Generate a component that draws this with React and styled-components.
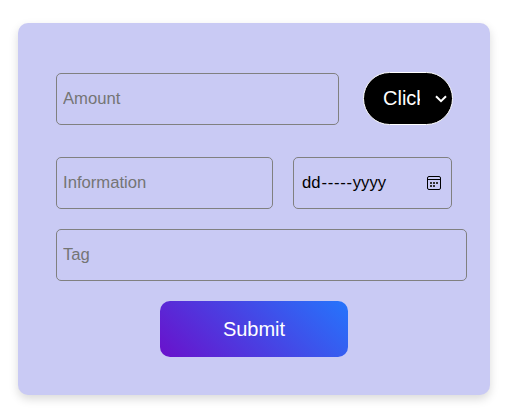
import React from "react";
import styled, { createGlobalStyle } from "styled-components";

const GlobalStyle = createGlobalStyle`
  * { box-sizing: border-box; }
  body {
    margin: 0;
    background: #fff;
    font-family: "Liberation Sans", Arial, sans-serif;
  }
`;

const Page = styled.main`
  min-height: 100vh;
  padding: 23px 0 0 18px;
`;

const Card = styled.form`
  width: 472px;
  height: 372px;
  padding: 49px 23px 0 38px;
  border-radius: 10px;
  background: #c9caf4;
  box-shadow: 0 4px 10px rgba(0, 0, 0, 0.15);
`;

const Row = styled.div`
  display: flex;
  align-items: center;
  gap: ${(p) => p.$gap || 0}px;
  height: ${(p) => p.$height || 52}px;
  margin-bottom: ${(p) => p.$space || 0}px;
`;

const Field = styled.input`
  width: ${(p) => p.$width}px;
  height: 52px;
  padding: 0 6px;
  border: 1px solid #808080;
  border-radius: 5px;
  outline: none;
  background: transparent;
  color: #000;
  font: 16.67px "Liberation Sans", Arial, sans-serif;

  &::placeholder {
    color: #757575;
    opacity: 1;
  }
`;

const DateField = styled.div`
  display: flex;
  align-items: center;
  justify-content: space-between;
  width: 159px;
  height: 52px;
  padding: 0 10px 0 8px;
  border: 1px solid #808080;
  border-radius: 5px;
  color: #000;
  font-size: 16.67px;
`;

const DateText = styled.span`
  display: flex;
`;

const Dashes = styled.span`
  margin: 0 0 0 1px;
  letter-spacing: 0.7px;
`;

const Select = styled.div`
  display: flex;
  align-items: center;
  justify-content: space-between;
  width: 90px;
  height: 53px;
  padding: 0 5px 0 19px;
  border: 1px solid #fff;
  border-radius: 27px;
  background: #000;
  color: #fff;
  font-size: 20px;
`;

const SelectLabel = styled.span`
  width: 37px;
  overflow: hidden;
  white-space: nowrap;
`;

const Submit = styled.button`
  display: block;
  width: 188px;
  height: 56px;
  margin-left: 104px;
  padding: 0;
  border: 0;
  border-radius: 10px;
  background: linear-gradient(45deg, #6a11cb 0%, #2575fc 100%);
  color: #fff;
  font: 20px "Liberation Sans", Arial, sans-serif;
`;

const Chevron = () => (
  <svg width="12" height="8" viewBox="0 0 12 8" fill="none" stroke="#fff" strokeWidth="2">
    <path d="M1 1.2 6 6.2 11 1.2" />
  </svg>
);

const CalendarIcon = () => (
  <svg width="14" height="14" viewBox="0 0 14 14">
    <rect x="0.5" y="0.5" width="13" height="13" rx="1.5" fill="none" stroke="#000" />
    <path d="M1 3.5H13" stroke="#000" />
    <path d="M3 6h2v2H3zM6 6h2v2H6zM9 6h2v2H9zM3 9h2v2H3zM6 9h2v2H6z" fill="#333" />
  </svg>
);

export default function App() {
  return (
    <>
      <GlobalStyle />
      <Page>
        <Card onSubmit={(e) => e.preventDefault()}>
          <Row $gap={24} $height={53} $space={32}>
            <Field $width={283} placeholder="Amount" />
            <Select>
              <SelectLabel>Click</SelectLabel>
              <Chevron />
            </Select>
          </Row>
          <Row $gap={20} $space={20}>
            <Field $width={217} placeholder="Information" />
            <DateField>
              <DateText>
                <span>dd</span>
                <Dashes>-----</Dashes>
                <span>yyyy</span>
              </DateText>
              <CalendarIcon />
            </DateField>
          </Row>
          <Row $space={20}>
            <Field $width={411} placeholder="Tag" />
          </Row>
          <Submit type="submit">Submit</Submit>
        </Card>
      </Page>
    </>
  );
}
